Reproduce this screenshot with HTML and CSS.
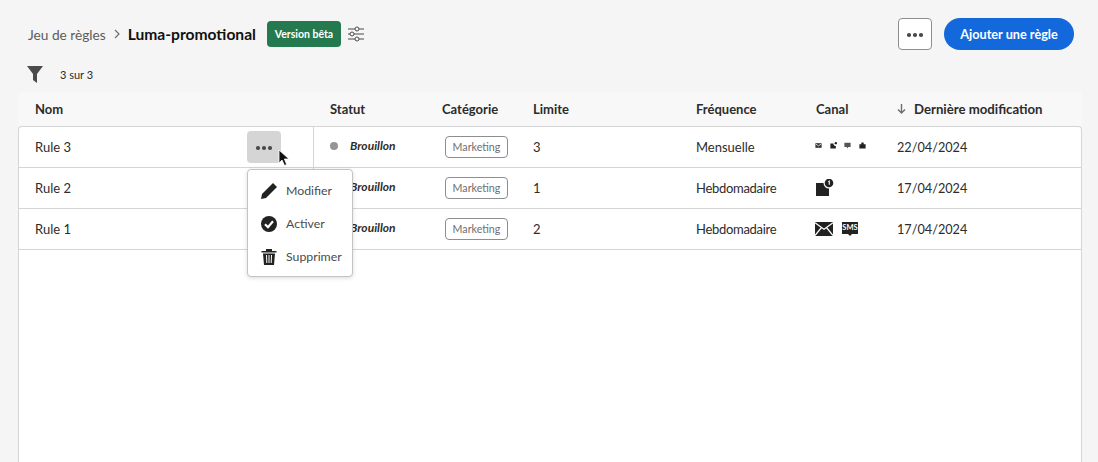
FILE: index.html
```html
<!DOCTYPE html>
<html lang="fr">
<head>
  <meta charset="UTF-8" />
  <title>Jeu de règles</title>
  <link rel="stylesheet" href="styles.css">
</head>
<body>
  <header class="topbar">
    <nav class="crumbs">
      <span class="crumb-parent">Jeu de règles</span>
      <svg class="crumb-sep" width="8" height="10" viewBox="0 0 8 10"><path d="M2 1l4 4-4 4" fill="none" stroke="#707070" stroke-width="1.2"/></svg>
      <span class="crumb-current">Luma-promotional</span>
    </nav>
    <span class="beta">Version bêta</span>
    <svg class="sliders" width="18" height="16" viewBox="0 0 18 16" fill="none" stroke="#4b4b4b" stroke-width="1">
      <path d="M1 3h7M12 3h5M1 8h2M7 8h10M1 13h7M12 13h5"/>
      <circle cx="10" cy="3" r="2"/><circle cx="5" cy="8" r="2"/><circle cx="10" cy="13" r="2"/>
    </svg>
    <div class="actions">
      <button class="btn-more" type="button"><span class="dots"><i></i><i></i><i></i></span></button>
      <button class="btn-add" type="button">Ajouter une règle</button>
    </div>
  </header>

  <div class="filterbar">
    <svg width="16" height="17" viewBox="0 0 16 17"><path d="M0 0h16L10 8v9l-4-3V8z" fill="#4b4b4b"/></svg>
    <span class="count">3 sur 3</span>
  </div>

  <main class="table">
    <div class="row head">
      <div class="cell name">Nom</div>
      <div class="cell">Statut</div>
      <div class="cell">Catégorie</div>
      <div class="cell">Limite</div>
      <div class="cell">Fréquence</div>
      <div class="cell">Canal</div>
      <div class="cell sorted">
        <svg width="9" height="10" viewBox="0 0 9 10"><path d="M4.5 0v9M1 5.5l3.5 3.5L8 5.5" fill="none" stroke="#6e6e6e" stroke-width="1.4"/></svg>
        <span>Dernière modification</span>
      </div>
    </div>

    <div class="tbody">
      <div class="row">
        <div class="cell name">
          <span>Rule 3</span>
          <button class="row-more" type="button"><span class="dots"><i></i><i></i><i></i></span></button>
          <svg class="cursor" width="12" height="18" viewBox="0 0 12 18"><path d="M1 1v13l3-3 2.5 5.5 2.2-1L6.4 10H11z" fill="#111" stroke="#fff" stroke-width=".8"/></svg>
          <ul class="menu">
            <li>
              <svg width="18" height="18" viewBox="0 0 18 18"><path d="M13 1l4 4L6 16l-5 1 1-5z" fill="#222"/></svg>
              Modifier
            </li>
            <li>
              <svg width="18" height="18" viewBox="0 0 18 18"><circle cx="9" cy="9" r="8" fill="#222"/><path d="M5 9.2l3 3 5-6" fill="none" stroke="#fff" stroke-width="2.2"/></svg>
              Activer
            </li>
            <li>
              <svg width="18" height="18" viewBox="0 0 18 18"><path d="M1.5 3h15v1.500h-15zM6 1h6v2H6zM3 5.500h12L14 17H4z" fill="#222"/><path d="M6.500 7l.3 8M9 7v8M11.500 7l-.3 8" stroke="#fff" stroke-width="1"/></svg>
              Supprimer
            </li>
          </ul>
        </div>
        <div class="cell status"><i class="dot"></i><em>Brouillon</em></div>
        <div class="cell"><span class="tag">Marketing</span></div>
        <div class="cell">3</div>
        <div class="cell">Mensuelle</div>
        <div class="cell channels tiny">
          <svg width="7" height="7" viewBox="0 0 18 18"><path d="M1 3h16v12H1z" fill="#333"/><path d="M2 5l7 5 7-5" fill="none" stroke="#fff" stroke-width="2"/></svg>
          <svg width="7" height="7" viewBox="0 0 18 18"><path d="M1 4h8a5 5 0 0 0 6 6v7H1z" fill="#222"/><circle cx="15" cy="3" r="3" fill="#222"/></svg>
          <svg width="7" height="7" viewBox="0 0 18 18"><path d="M1 2h16v11H11l-2 4-2-4H1z" fill="#555"/></svg>
          <svg width="7" height="7" viewBox="0 0 18 18"><path d="M1 6h16v11H1zM6 1h6v5H6z" fill="#222"/></svg>
        </div>
        <div class="cell date">22/04/2024</div>
      </div>

      <div class="row">
        <div class="cell name"><span>Rule 2</span></div>
        <div class="cell status"><i class="dot"></i><em>Brouillon</em></div>
        <div class="cell"><span class="tag">Marketing</span></div>
        <div class="cell">1</div>
        <div class="cell weekly">Hebdomadaire</div>
        <div class="cell channels">
          <svg width="20" height="18" viewBox="0 -2 20 18"><rect y="2" width="13" height="13" fill="#222"/><circle cx="13" cy="2" r="5.500" fill="#fff"/><circle cx="13" cy="2" r="4.300" fill="#222"/><path d="M12.300 .8l1-.6v3.600" fill="none" stroke="#fff" stroke-width="1.100"/></svg>
        </div>
        <div class="cell date">17/04/2024</div>
      </div>

      <div class="row">
        <div class="cell name"><span>Rule 1</span></div>
        <div class="cell status"><i class="dot"></i><em>Brouillon</em></div>
        <div class="cell"><span class="tag">Marketing</span></div>
        <div class="cell">2</div>
        <div class="cell weekly">Hebdomadaire</div>
        <div class="cell channels wide">
          <svg width="18" height="14" viewBox="0 0 18 14"><path d="M0 0h18v14H0z" fill="#222"/><path d="M0 .8l9 6.400 9-6.400M0 13.500l6.500-8M18 13.500l-6.500-8" fill="none" stroke="#fff" stroke-width="1.200"/></svg>
          <span class="sms">SMS</span>
        </div>
        <div class="cell date">17/04/2024</div>
      </div>
    </div>
  </main>
</body>
</html>
```

FILE: styles.css
```css
* {
  box-sizing: border-box;
}
html, body {
  height: 462px;
  overflow: hidden;
}
body {
  margin: 0;
  background-color: #f5f5f5;
  color: #2c2c2c;
  font-family: Lato, "Noto Sans", sans-serif;
  font-size: 13px;
  display: flex;
  flex-direction: column;
}

.topbar {
  display: flex;
  align-items: center;
  height: 32px;
  margin-top: 18px;
  padding: 0 24px 0 28px;
}
.crumbs {
  display: flex;
  align-items: center;
}
.crumb-parent {
  font-size: 13.7px;
  color: #5c5c5c;
}
.crumb-sep {
  margin: 0 7px;
}
.crumb-current {
  font-size: 15.6px;
  font-weight: 700;
  color: #111;
}
.beta {
  margin-left: 11px;
  width: 74px;
  height: 26px;
  line-height: 26px;
  text-align: center;
  border-radius: 4px;
  background-color: #24794f;
  color: #fff;
  font-size: 10.5px;
  font-weight: 700;
}
.sliders {
  margin-left: 6px;
}
.actions {
  margin-left: auto;
  display: flex;
  gap: 12px;
}
.btn-more {
  width: 34px;
  height: 32px;
  padding: 0;
  background-color: #fff;
  border: 1px solid #8e8e8e;
  border-radius: 4px;
}
.btn-add {
  width: 130px;
  height: 32px;
  padding: 0;
  border: none;
  border-radius: 16px;
  background-color: #1368dc;
  color: #fff;
  font-family: inherit;
  font-size: 12.7px;
  font-weight: 700;
}
.dots {
  display: inline-flex;
  gap: 2.5px;
  vertical-align: middle;
}
.dots i {
  width: 3.5px;
  height: 3.5px;
  border-radius: 50%;
  background-color: #4b4b4b;
}

.filterbar {
  display: flex;
  align-items: center;
  gap: 17px;
  height: 17px;
  margin-top: 16px;
  padding-left: 27px;
}
.count {
  font-size: 11px;
}

.table {
  flex: 1;
  margin: 9px 16px 0 18px;
  display: flex;
  flex-direction: column;
}
.row {
  display: grid;
  grid-template-columns: 295px 112px 91px 163px 120px 81px 1fr;
  height: 41px;
  border-bottom: 1px solid #d5d5d5;
}
.cell {
  display: flex;
  align-items: center;
  padding-left: 16px;
  white-space: nowrap;
}
.head {
  height: 34px;
  padding-left: 1px;
  border-bottom: none;
  border-radius: 4px 4px 0 0;
  background-color: #f8f8f8;
  font-weight: 700;
}
.sorted {
  gap: 8px;
  font-size: 13.2px;
}
.tbody {
  flex: 1;
  background-color: #fff;
  border: 1px solid #d5d5d5;
  border-bottom: none;
  border-radius: 4px 4px 0 0;
}
.name {
  position: relative;
  justify-content: space-between;
  padding-right: 32px;
  border-right: 1px solid #d5d5d5;
}
.head .name {
  border-right: none;
}
.row-more {
  width: 34px;
  height: 32px;
  padding: 0;
  border: none;
  border-radius: 4px;
  background-color: #d5d5d5;
}
.weekly {
  letter-spacing: -.3px;
}
.date {
  font-size: 12.7px;
}

.cursor {
  position: absolute;
  left: 259px;
  top: 22px;
}
.menu {
  position: absolute;
  left: 228px;
  top: 42px;
  z-index: 2;
  width: 106px;
  height: 108px;
  margin: 0;
  padding: 4px 0;
  list-style: none;
  background-color: #fff;
  border: 1px solid #c4c4c4;
  border-radius: 4px;
  box-shadow: 0 1px 4px rgba(0, 0, 0, .15);
  font-size: 12.3px;
  color: #4b4b4b;
}
.menu li {
  display: flex;
  align-items: center;
  gap: 8px;
  height: 33px;
  padding-left: 12px;
}

.status em {
  margin-bottom: 4px;
  font-weight: 700;
  font-size: 12px;
}
.dot {
  width: 8px;
  height: 8px;
  margin-bottom: 2px;
  margin-right: 12px;
  border-radius: 50%;
  background-color: #959595;
}
.tag {
  margin-left: 3px;
  width: 63px;
  height: 22px;
  line-height: 20px;
  text-align: center;
  border: 1px solid #8e8e8e;
  border-radius: 4px;
  font-size: 10.7px;
  color: #6e6e6e;
}
.channels {
  gap: 8px;
}
.tiny {
  gap: 7.5px;
  padding-left: 15px;
  padding-bottom: 3px;
}
.wide {
  padding-left: 15px;
  gap: 9px;
}
.sms {
  position: relative;
  width: 16px;
  height: 12px;
  margin-bottom: 2px;
  line-height: 12px;
  text-align: center;
  background-color: #222;
  color: #fff;
  font-size: 7.5px;
  font-weight: 700;
}
.sms::after {
  content: "";
  position: absolute;
  left: 6px;
  top: 12px;
  border: 2px solid transparent;
  border-top-color: #222;
}
```
